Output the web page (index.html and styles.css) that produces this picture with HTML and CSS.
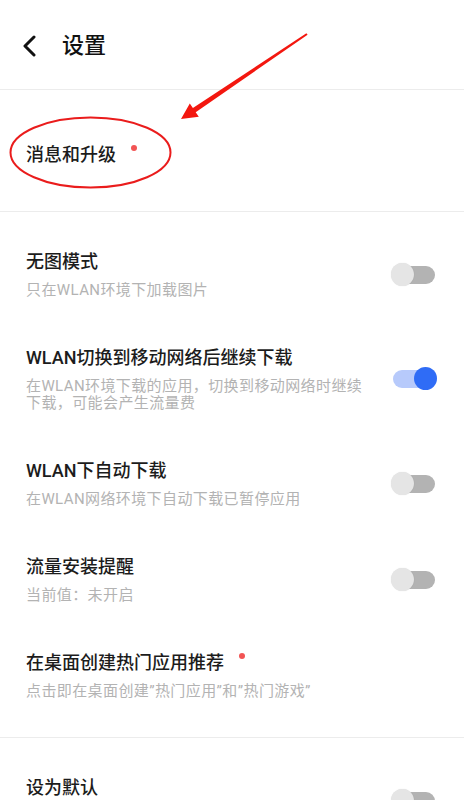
FILE: index.html
```html
<!DOCTYPE html>
<html lang="zh-CN">
<head>
  <meta charset="UTF-8">
  <meta name="viewport" content="width=device-width, initial-scale=1.0">
  <title>设置</title>
  <link rel="stylesheet" href="styles.css">
</head>
<body>
  <div class="page">
    <div class="topbar">
      <svg class="back" width="16" height="22" viewBox="0 0 16 22">
        <path d="M13 2 L4 11 L13 20" fill="none" stroke="#111" stroke-width="3" stroke-linecap="round" stroke-linejoin="round"/>
      </svg>
      <h1 class="topbar-title">设置</h1>
    </div>

    <div class="group group-first">
      <div class="item-title">消息和升级<span class="dot"></span></div>
    </div>

    <div class="group">
      <div class="item">
        <div class="item-text">
          <div class="item-title">无图模式</div>
          <div class="item-desc">只在WLAN环境下加载图片</div>
        </div>
        <div class="switch"></div>
      </div>
      <div class="item">
        <div class="item-text">
          <div class="item-title">WLAN切换到移动网络后继续下载</div>
          <div class="item-desc">在WLAN环境下载的应用，切换到移动网络时继续下载，可能会产生流量费</div>
        </div>
        <div class="switch on"></div>
      </div>
      <div class="item">
        <div class="item-text">
          <div class="item-title">WLAN下自动下载</div>
          <div class="item-desc">在WLAN网络环境下自动下载已暂停应用</div>
        </div>
        <div class="switch"></div>
      </div>
      <div class="item">
        <div class="item-text">
          <div class="item-title">流量安装提醒</div>
          <div class="item-desc">当前值：未开启</div>
        </div>
        <div class="switch"></div>
      </div>
      <div class="item">
        <div class="item-text">
          <div class="item-title">在桌面创建热门应用推荐<span class="dot"></span></div>
          <div class="item-desc">点击即在桌面创建”热门应用”和”热门游戏”</div>
        </div>
      </div>
    </div>

    <div class="group">
      <div class="item">
        <div class="item-text">
          <div class="item-title">设为默认</div>
          <div class="item-desc">设为默认应用商店</div>
        </div>
        <div class="switch"></div>
      </div>
    </div>

    <!-- red annotation drawn over the screenshot -->
    <svg class="markup" width="464" height="800" viewBox="0 0 464 800">
      <ellipse cx="90.5" cy="152.5" rx="80" ry="35" fill="none" stroke="#ea1c1c" stroke-width="2"/>
      <polygon points="306.4,33.2 307.6,34.8 195.7,112.2 198.8,116.7 181,119 189.8,103.5 192.9,108" fill="#f3170f"/>
    </svg>
  </div>
</body>
</html>
```

FILE: styles.css
```css
* {
  margin: 0;
  padding: 0;
  box-sizing: border-box;
}
body {
  background-color: #fff;
  font-family: Roboto, "Noto Sans CJK SC", sans-serif;
  color: #1f1f1f;
}
.page {
  position: relative;
  width: 464px;
  min-height: 800px;
  overflow: hidden;
}
.topbar {
  display: flex;
  align-items: center;
  height: 90px;
  padding: 3px 0 0 21px;
  border-bottom: 1px solid #ececec;
}
.back {
  display: block;
}
.topbar-title {
  margin-left: 25px;
  font-size: 22px;
  font-weight: 500;
  line-height: 30px;
  color: #111;
}
.group {
  padding: 14px 0;
  border-bottom: 1px solid #ececec;
}
.group-first {
  padding: 53px 27px 44px 26px;
}
.item {
  display: flex;
  align-items: center;
  padding: 24px 27px 23px 26px;
}
.item-text {
  flex: 1;
  max-width: 345px;
}
.item-title {
  font-size: 18px;
  font-weight: 500;
  line-height: 24px;
  color: #1c1c1c;
}
.item-desc {
  margin-top: 8px;
  font-size: 15px;
  line-height: 17px;
  letter-spacing: 0.4px;
  color: #b3b3b3;
}
.dot {
  display: inline-block;
  width: 6px;
  height: 6px;
  margin-left: 15px;
  border-radius: 50%;
  background-color: #f25454;
  vertical-align: 10px;
}
.switch {
  position: relative;
  width: 46px;
  height: 24px;
  margin-left: auto;
  flex-shrink: 0;
}
.switch::before {
  content: "";
  position: absolute;
  left: 2px;
  right: 2px;
  top: 3px;
  height: 18px;
  border-radius: 9px;
  background-color: #b3b3b3;
}
.switch::after {
  content: "";
  position: absolute;
  left: 0;
  top: 0;
  width: 23px;
  height: 23px;
  border-radius: 50%;
  background-color: #e5e5e5;
  box-shadow: 0 0 1px rgba(0, 0, 0, 0.15);
}
.switch.on::before {
  background-color: #b7cafb;
}
.switch.on::after {
  left: auto;
  right: 0;
  background-color: #2f6cf6;
  box-shadow: none;
}
.markup {
  position: absolute;
  top: 0;
  left: 0;
  pointer-events: none;
}
```
